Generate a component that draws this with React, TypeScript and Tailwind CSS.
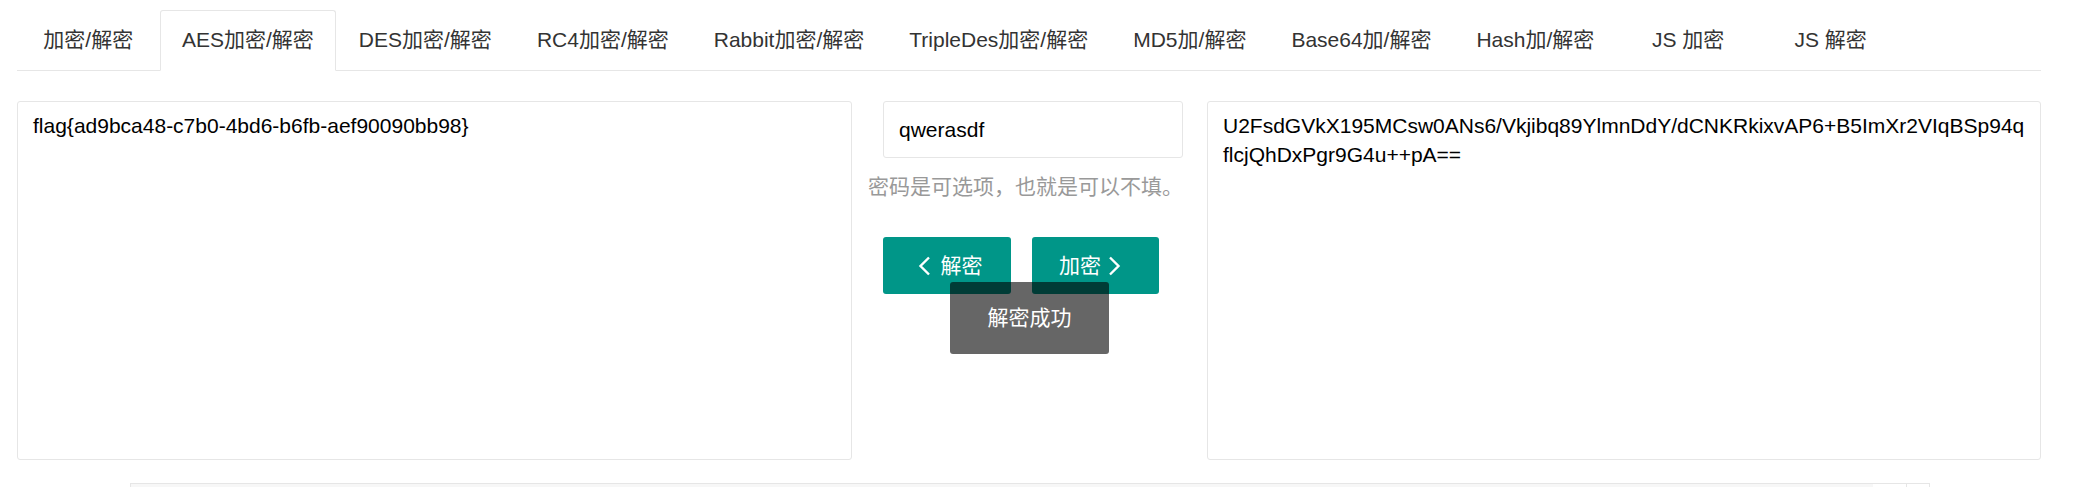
import React, { useState } from 'react';

const tabs = [
  '加密/解密',
  'AES加密/解密',
  'DES加密/解密',
  'RC4加密/解密',
  'Rabbit加密/解密',
  'TripleDes加密/解密',
  'MD5加/解密',
  'Base64加/解密',
  'Hash加/解密',
  'JS 加密',
  'JS 解密',
];

function ChevronLeft() {
  return (
    <svg width="13" height="20" viewBox="0 0 13 20" fill="none" className="shrink-0">
      <path d="M11 1.5 L2.5 10 L11 18.5" stroke="white" strokeWidth="2.4" strokeLinejoin="miter" />
    </svg>
  );
}

function ChevronRight() {
  return (
    <svg width="13" height="20" viewBox="0 0 13 20" fill="none" className="shrink-0">
      <path d="M2 1.5 L10.5 10 L2 18.5" stroke="white" strokeWidth="2.4" strokeLinejoin="miter" />
    </svg>
  );
}

export default function App() {
  const [active, setActive] = useState(1);
  const [password, setPassword] = useState('qwerasdf');

  return (
    <div
      className="bg-white min-h-screen pl-[17px] pr-[38px] pt-[10px] text-[21px] text-[#333]"
      style={{ fontFamily: '"Liberation Sans", Arial, "Noto Sans CJK SC", sans-serif' }}
    >
      {/* Tabs */}
      <ul className="flex h-[61px] border-b border-[#e6e6e6]">
        {tabs.map((t, i) => (
          <li
            key={t}
            onClick={() => setActive(i)}
            className={
              'min-w-[142.5px] h-[61px] text-center whitespace-nowrap cursor-pointer ' +
              (i === active
                ? 'px-[21.5px] leading-[58px] border border-[#e6e6e6] border-b-white rounded-t-[3px] bg-white'
                : 'px-[22.5px] leading-[60px]')
            }
          >
            {t}
          </li>
        ))}
      </ul>

      {/* Main panel */}
      <div className="grid grid-cols-[835px_355px_834px] mt-[30px]">
        <div className="h-[359px] border border-[#e6e6e6] rounded-[3px] px-[15px] py-[9px] leading-[30px] text-black">
          flag{'{'}ad9bca48-c7b0-4bd6-b6fb-aef90090bb98{'}'}
        </div>

        <div className="relative">
          <div className="pl-[31px]">
            <input
              value={password}
              onChange={(e) => setPassword(e.target.value)}
              className="w-[300px] h-[57px] border border-[#e6e6e6] rounded-[3px] px-[15px] text-[21px] text-black outline-none"
            />
          </div>
          <p className="pl-[16px] mt-[14px] leading-[30px] text-[#999] whitespace-nowrap">
            密码是可选项，也就是可以不填。
          </p>
          <div className="pl-[31px] mt-[35px] flex gap-[21px]">
            <button className="w-[128px] h-[57px] bg-[#009688] rounded-[3px] text-white flex items-center justify-center gap-[10px] pl-[6px]">
              <ChevronLeft />
              <span>解密</span>
            </button>
            <button className="w-[127px] h-[57px] bg-[#009688] rounded-[3px] text-white flex items-center gap-[7px] pl-[27px]">
              <span>加密</span>
              <ChevronRight />
            </button>
          </div>

          {/* Toast */}
          <div className="absolute left-[98px] top-[181px] w-[159px] h-[72px] bg-black/60 rounded-[3px] text-white flex items-center justify-center">
            解密成功
          </div>
        </div>

        <div className="h-[359px] border border-[#e6e6e6] rounded-[3px] px-[15px] py-[9px] leading-[29px] text-black">
          <div className="whitespace-nowrap">U2FsdGVkX195MCsw0ANs6/Vkjibq89YlmnDdY/dCNKRkixvAP6+B5ImXr2VIqBSp94q</div>
          <div className="whitespace-nowrap">flcjQhDxPgr9G4u++pA==</div>
        </div>
      </div>

      {/* Lower box */}
      <div className="mt-[23px] ml-[113px] w-[1800px] h-[20px] flex border border-b-0 border-[#e6e6e6]">
        <div className="flex-1 bg-[#f7f7f7]" />
        <div className="w-[34px] bg-white border-r border-[#e6e6e6]" />
        <div className="w-[22px] bg-white" />
      </div>
    </div>
  );
}
